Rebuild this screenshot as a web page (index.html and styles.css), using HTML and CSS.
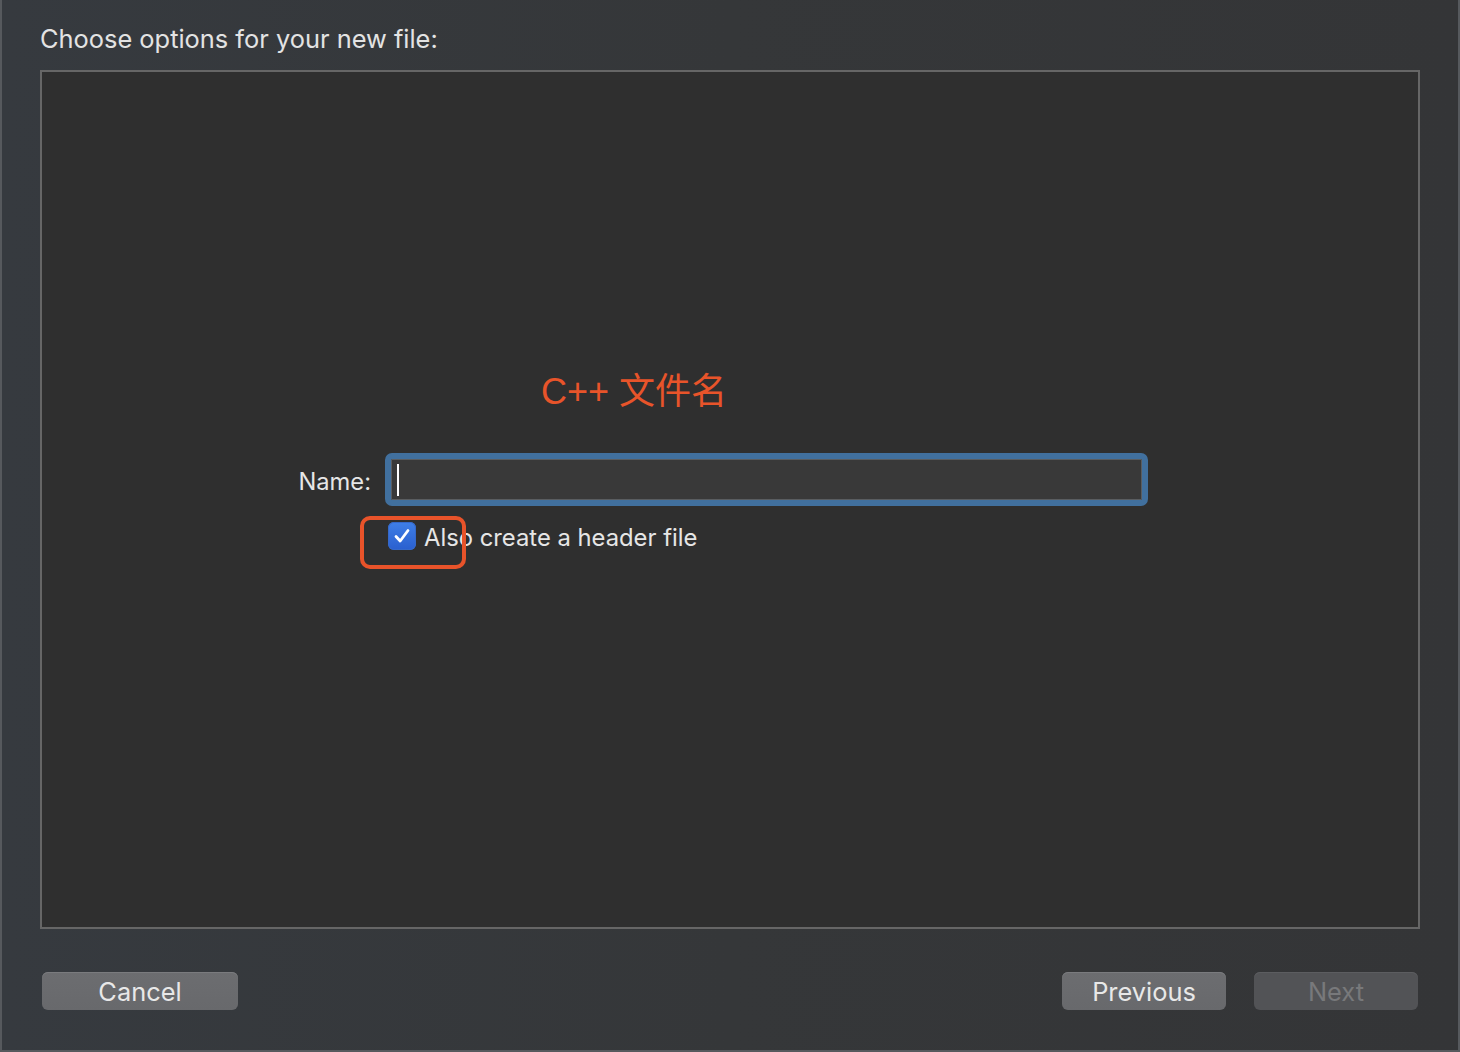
FILE: index.html
```html
<!DOCTYPE html>
<html>
<head>
<meta charset="utf-8">
<link rel="stylesheet" href="styles.css">
</head>
<body>
<div class="window">
  <div class="title">Choose options for your new file:</div>
  <div class="panel">
    <div class="note">C++ 文件名</div>
    <div class="form">
      <label class="label">Name:</label>
      <div class="field"><span class="caret"></span></div>
      <div class="check-row">
        <span class="checkbox">
          <svg width="28" height="28" viewBox="0 0 28 28"><path d="M8 14.5 L12.2 19 L20 8.5" fill="none" stroke="#fff" stroke-width="2.8" stroke-linecap="round" stroke-linejoin="round"/></svg>
        </span>
        <span class="check-text">Also create a header file</span>
        <span class="highlight"></span>
      </div>
    </div>
  </div>
  <div class="footer">
    <button class="btn btn-cancel">Cancel</button>
    <div class="right-btns">
      <button class="btn btn-prev">Previous</button>
      <button class="btn btn-next">Next</button>
    </div>
  </div>
</div>
</body>
</html>
```

FILE: styles.css
```css
html, body {
  margin: 0;
  padding: 0;
  width: 1460px;
  height: 1052px;
  overflow: hidden;
  background: #35383c;
}
.window {
  box-sizing: border-box;
  width: 1460px;
  height: 1052px;
  border-left: 2px solid #56595d;
  border-right: 2px solid #56595d;
  border-bottom: 2px solid #56595d;
  background: linear-gradient(to right, #363a3f 0%, #353739 50%, #343537 100%);
  padding: 0 38px 0 38px;
  font-family: Inter, "Noto Sans", "Liberation Sans", sans-serif;
  color: #e6e6e6;
  display: flex;
  flex-direction: column;
}
.title {
  font-size: 25.4px;
  line-height: 30px;
  padding-top: 24px;
  margin-bottom: 16px;
  color: #e3e3e3;
}
.panel {
  box-sizing: border-box;
  width: 1380px;
  height: 859px;
  border: 2px solid #666666;
  background: #2f2f2f;
  padding-top: 298px;
}
.note {
  font-family: "Liberation Sans", "Noto Sans CJK SC", sans-serif;
  font-size: 36px;
  line-height: 44px;
  color: #e8542a;
  margin-left: 499px;
  margin-bottom: 39px;
}
.form {
  display: grid;
  grid-template-columns: 329px 763px;
  column-gap: 14px;
  row-gap: 16px;
}
.label {
  justify-self: end;
  align-self: center;
  font-size: 23.7px;
  padding-top: 4px;
  color: #e6e6e6;
}
.field {
  box-sizing: border-box;
  height: 53px;
  border: 6px solid #41709e;
  border-radius: 7px;
  background: #393939;
  box-shadow: inset 0 0 0 1px #5a5d60;
  display: flex;
  align-items: center;
  padding-left: 6px;
}
.caret {
  display: block;
  width: 2px;
  height: 32px;
  background: #ffffff;
}
.check-row {
  grid-column: 2;
  position: relative;
  display: flex;
  align-items: center;
  padding-left: 3px;
  height: 28px;
}
.checkbox {
  width: 28px;
  height: 28px;
  border-radius: 6px;
  background: linear-gradient(to bottom, #3f7fe6, #2a5fcf);
  box-shadow: inset 0 0 0 1px #3568c8;
  display: block;
}
.checkbox svg { display: block; }
.check-text {
  margin-left: 8px;
  font-size: 23.8px;
  padding-top: 3px;
  color: #e6e6e6;
}
.highlight {
  position: absolute;
  left: -25px;
  top: -6px;
  width: 106px;
  height: 53px;
  box-sizing: border-box;
  border: 4px solid #e8532a;
  border-radius: 10px;
}
.footer {
  display: flex;
  justify-content: space-between;
  padding: 0 2px;
  margin-top: 43px;
}
.right-btns {
  display: flex;
  gap: 28px;
}
.btn {
  font-family: Inter, "Noto Sans", "Liberation Sans", sans-serif;
  font-size: 25.4px;
  height: 38px;
  border: none;
  border-radius: 6px;
  padding: 0;
  color: #e8e8e8;
  background: linear-gradient(to bottom, #6c6d70, #68696c);
  box-shadow: inset 0 1px 0 #7a7b7e;
}
.btn-cancel { width: 196px; }
.btn-prev { width: 164px; }
.btn-next {
  width: 164px;
  background: #525356;
  box-shadow: inset 0 1px 0 #5c5d60;
  color: #78797b;
}
```
